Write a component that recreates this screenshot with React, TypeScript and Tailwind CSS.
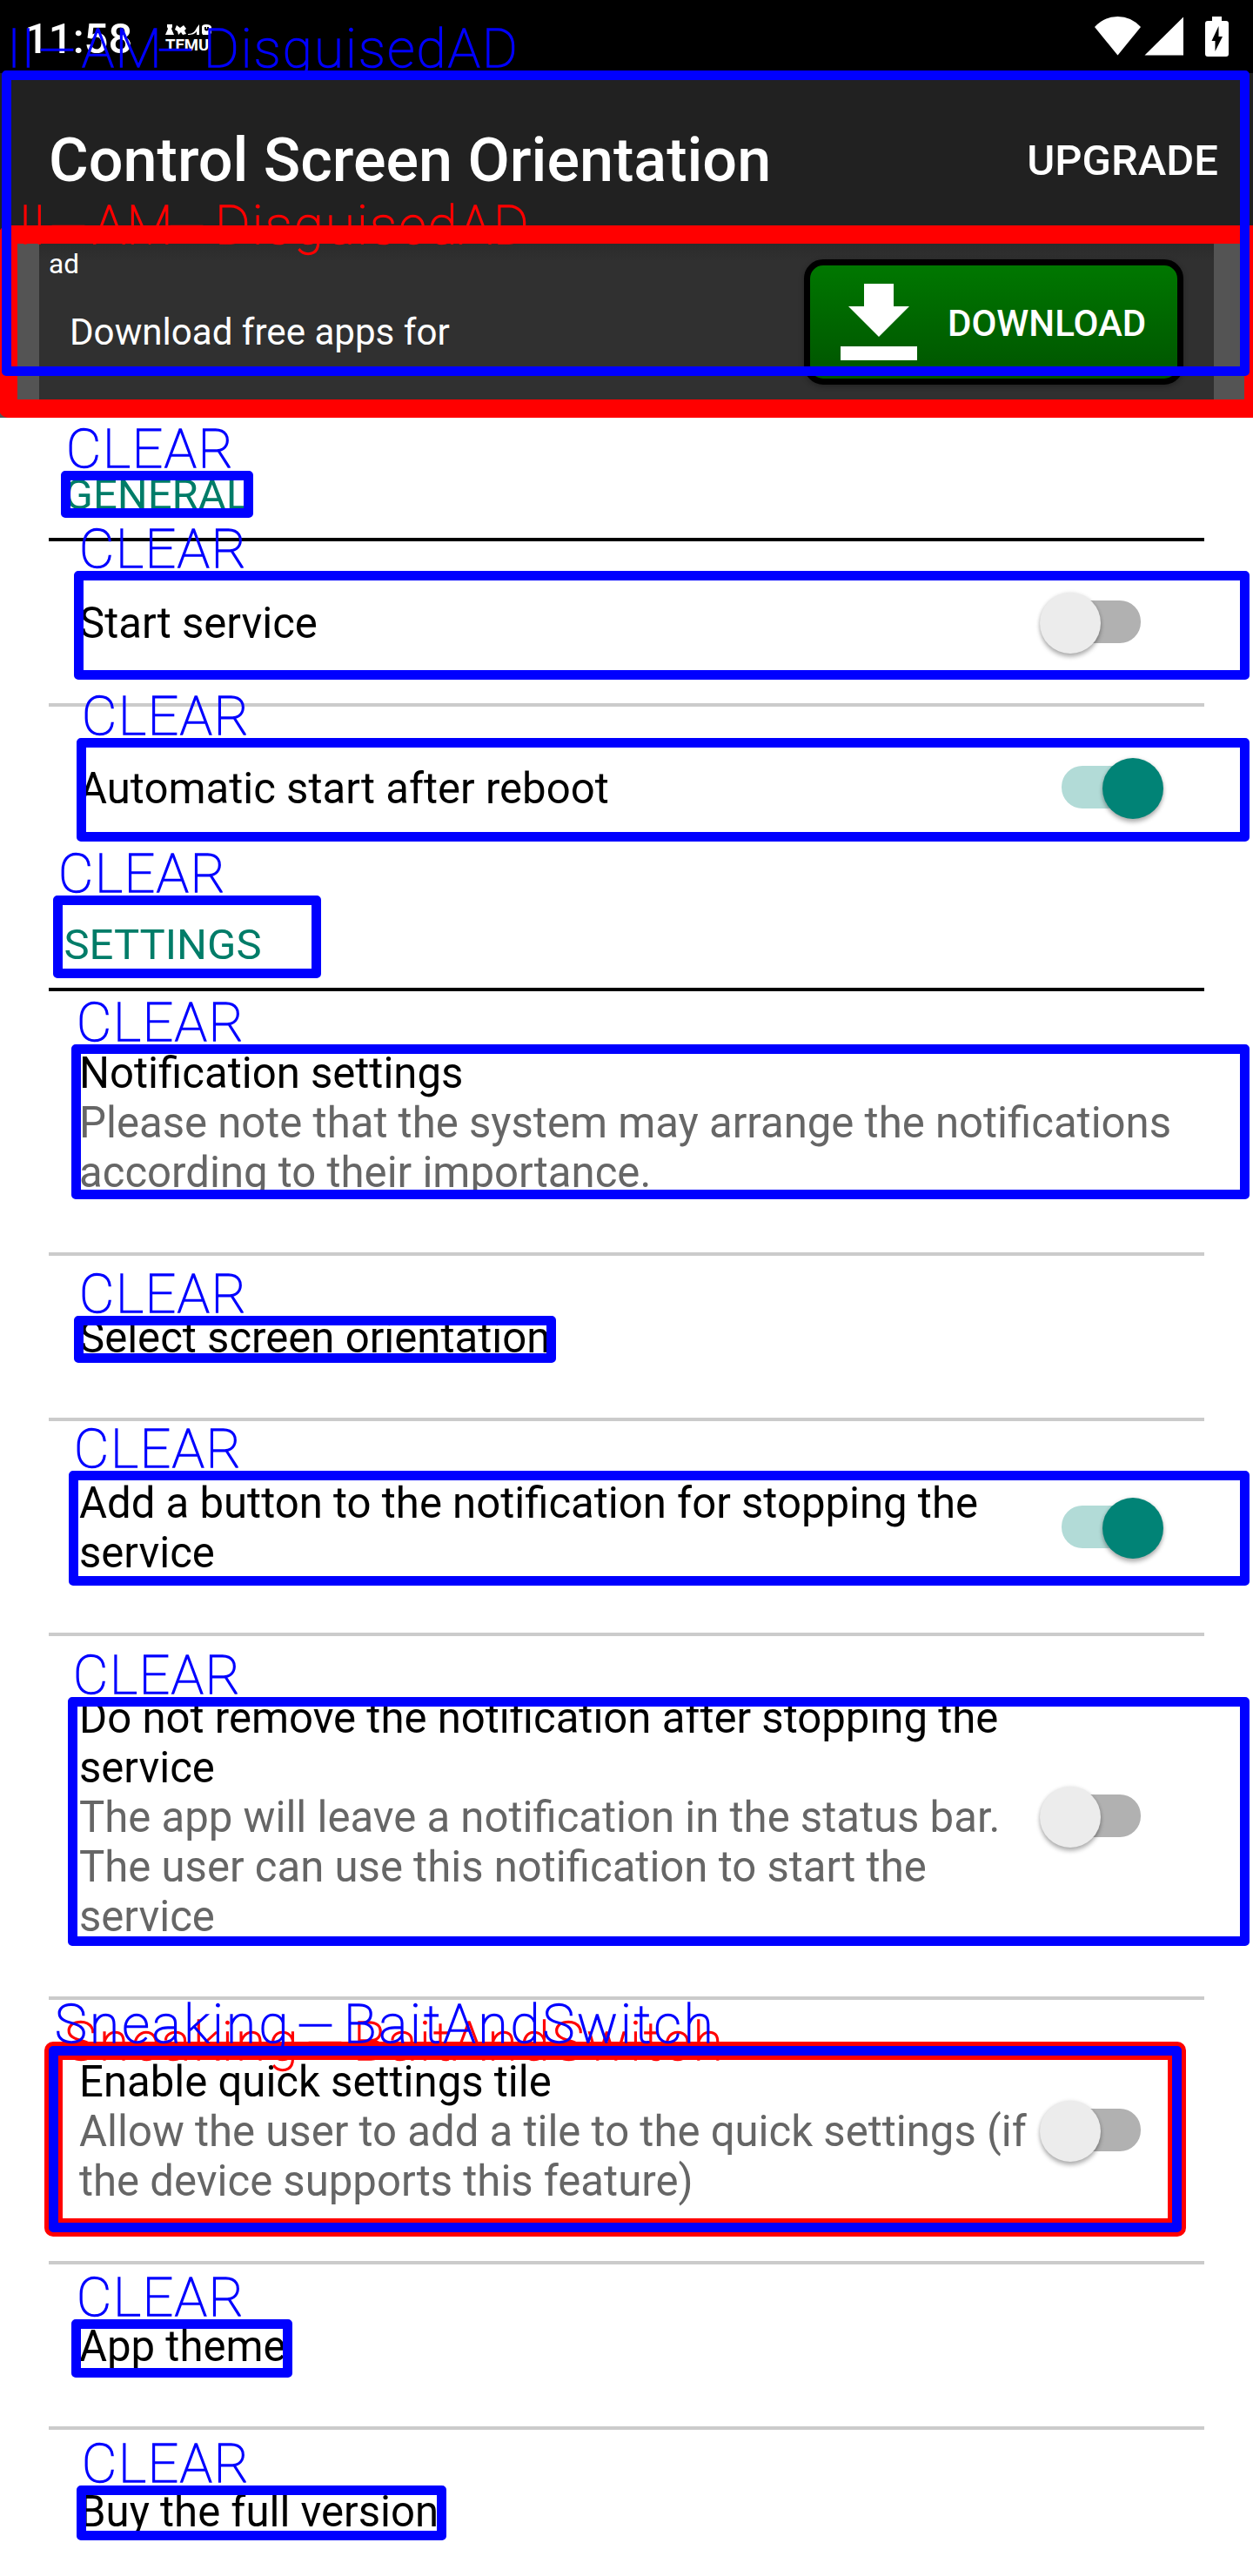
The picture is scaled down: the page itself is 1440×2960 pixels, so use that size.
import React from 'react';

type Line = { text: string; muted?: boolean };

function Switch({ on }: { on: boolean }) {
  const thumb = 'mt-[3px] size-[70px] shrink-0 rounded-full shadow-[0_4px_5px_rgba(0,0,0,0.28),0_0_4px_rgba(0,0,0,0.12)] ';
  return (
    <div
      className={
        'mb-1 flex h-[49px] w-[91px] shrink-0 items-center rounded-[24px] ' +
        (on ? 'justify-end bg-[#b2dbd7]' : 'justify-start bg-[#b1b1b1]')
      }
    >
      <div className={thumb + (on ? '-mr-[26px] bg-[#018376]' : '-ml-[25px] bg-[#ececec]')} />
    </div>
  );
}

function Row({ lines, on, last }: { lines: Line[]; on?: boolean; last?: boolean }) {
  return (
    <div
      className={
        'mx-14 flex items-center justify-between pb-[63px] pl-[35px] pr-[73px] pt-[66px] ' +
        (last ? '' : 'border-b-4 border-[#cbcbcb]')
      }
    >
      <div className="w-0 whitespace-nowrap text-[49.1px] leading-[57px]">
        {lines.map((l, i) => (
          <div key={i} className={l.muted ? 'text-[#666666]' : 'text-black'}>
            {l.text}
          </div>
        ))}
      </div>
      {on !== undefined && <Switch on={on} />}
    </div>
  );
}

function Header({ children }: { children: string }) {
  return (
    <div className="mx-14 h-[141px] border-b-4 border-black pl-[17.5px] pt-[59px] text-[49px] leading-[57px] text-[#007c68]">
      {children}
    </div>
  );
}

const Dash = () => <span className="inline-block w-[64px] origin-center scale-x-[2.4] text-center">-</span>;

const labels = {
  clear: <span className="tracking-[1.8px]">CLEAR</span>,
  ad: (
    <>
      <span className="w-[26px]">II</span>
      <Dash />
      <span className="-ml-1 w-[76px] tracking-[1.5px]">AM</span>
      <Dash />
      <span className="tracking-[2.2px]">DisguisedAD</span>
    </>
  ),
  bait: (
    <>
      <span className="w-[269px] pl-px tracking-[3.4px]">Sneaking</span>
      <Dash />
      <span className="tracking-[3px]">BaitAndSwitch</span>
    </>
  ),
};

/* A labelled outline drawn over the screen. */
function Mark({ className, label = 'clear', heavy }: { className: string; label?: keyof typeof labels; heavy?: boolean }) {
  return (
    <div
      className={
        'absolute ' +
        (heavy
          ? 'rounded-[10px] border-[21px] border-[#ff0000] text-[#ff0000] '
          : 'rounded-[5px] border-[11px] border-[#0000ff] text-[#0000ff] ') +
        className
      }
    >
      <div
        className={
          'flex h-[62px] whitespace-nowrap text-[62px] font-thin leading-[62px] [-webkit-text-stroke:1.5px_currentColor] ' +
          (heavy ? '-mt-[52px] ml-px' : '-ml-[5px] -mt-[67px]')
        }
      >
        {labels[label]}
      </div>
    </div>
  );
}

function StatusBar() {
  return (
    <div className="flex h-[84px] bg-black px-[28px] text-white">
      <div className="w-[162px] pt-[16px] text-[49px] font-medium leading-[57px]">11:58</div>
      <div className="pt-[28px]">
        <svg width="54" height="12" viewBox="0 0 54 12" fill="white">
          <path d="M2 0h6v3l-1 2 3 7H0l3-7-1-2z" />
          <path d="M13 1l4 3 4-3 3 4-2 2 2 4-4 1-2-3-3 3-1-4-3-2z" />
          <path d="M26 11c6 0 8-3 10-7l3-4v12h-3V8c-2 3-5 4-10 4z" />
          <path fillRule="evenodd" d="M42 3q0-3 5-3t6 3v7l-2 2h-8l-1-2zm3 0v3q2 3 5 0V3h-2v2h-1V3z" />
        </svg>
        <div className="mt-[3px] text-[18.5px] font-bold leading-[18px]">TEMU</div>
      </div>
      <svg className="ml-auto mt-[18px]" width="156" height="48" viewBox="1256 18 156 48" fill="white">
        <path d="M1258 31Q1269 19 1284.500 19T1311 31L1284.500 63.500z" />
        <path d="M1360 19.500V63.500H1315.500z" />
        <path
          fillRule="evenodd"
          d="M1393 19h11v5h5q3 0 3 3v35q0 3-3 3h-21q-3 0-3-3V27q0-3 3-3h5zm7.500 11l-8 17h4v12l8.500-17h-4.500z"
        />
      </svg>
    </div>
  );
}

function AdBanner() {
  return (
    <div className="h-[200px] bg-[#545454] px-[45px]">
      <div className="flex h-full justify-between bg-[#303030] bg-linear-to-b from-[#2b2b2b] to-[#303030] to-10% pl-[11px] pr-[35px] text-white">
        <div className="pt-[5px]">
          <div className="text-[31.5px] leading-[37px]">ad</div>
          <div className="pl-[24px] pt-[35px] text-[42.1px] leading-[49px]">Download free apps for</div>
        </div>
        <div className="mt-[18px] flex h-[144px] w-[436px] rounded-[22px] border-7 border-black bg-linear-to-b from-[#007700] to-[#005500] shadow-[0_2px_6px_rgba(0,0,0,0.3)]">
          <svg className="ml-[35px] mt-[21px]" width="88" height="88" viewBox="0 0 88 88" fill="white">
            <path d="M27 0H61V26H79L44 61L9 26H27z" />
            <rect y="72" width="88" height="16" />
          </svg>
          <div className="ml-[35px] mt-[42px] text-[42px] font-medium leading-[49px]">DOWNLOAD</div>
        </div>
      </div>
    </div>
  );
}

export default function App() {
  return (
    <div className="relative h-[2960px] w-[1440px] overflow-hidden bg-white font-['Roboto',sans-serif]">
      <StatusBar />
      <div className="flex h-[196px] items-center justify-between bg-[#212121] pl-14 pr-[40px] pt-1 text-white">
        <h1 className="text-[70.1px] font-medium leading-[82px]">Control Screen Orientation</h1>
        <span className="text-[49px] font-medium leading-[57px]">UPGRADE</span>
      </div>
      <AdBanner />
      <div className="pt-px">
        <Header>GENERAL</Header>
        <Row lines={[{ text: 'Start service' }]} on={false} />
        <Row lines={[{ text: 'Automatic start after reboot' }]} on last />
        <Header>SETTINGS</Header>
        <Row
          lines={[
            { text: 'Notification settings' },
            { text: 'Please note that the system may arrange the notifications', muted: true },
            { text: 'according to their importance.', muted: true },
          ]}
        />
        <Row lines={[{ text: 'Select screen orientation' }]} />
        <Row lines={[{ text: 'Add a button to the notification for stopping the' }, { text: 'service' }]} on />
        <Row
          lines={[
            { text: 'Do not remove the notification after stopping the' },
            { text: 'service' },
            { text: 'The app will leave a notification in the status bar.', muted: true },
            { text: 'The user can use this notification to start the', muted: true },
            { text: 'service', muted: true },
          ]}
          on={false}
        />
        <Row
          lines={[
            { text: 'Enable quick settings tile' },
            { text: 'Allow the user to add a tile to the quick settings (if', muted: true },
            { text: 'the device supports this feature)', muted: true },
          ]}
          on={false}
        />
        <Row lines={[{ text: 'App theme' }]} />
        <Row lines={[{ text: 'Buy the full version' }]} last />
      </div>

      <Mark heavy label="ad" className="left-[-1px] top-[259px] h-[221px] w-[1452px]" />
      <Mark label="ad" className="left-[2px] top-[81px] h-[351px] w-[1434px]" />
      <Mark className="left-[70px] top-[541px] h-[54px] w-[221px]" />
      <Mark className="left-[85px] top-[656px] h-[125px] w-[1351px]" />
      <Mark className="left-[88px] top-[848px] h-[119px] w-[1348px]" />
      <Mark className="left-[61px] top-[1029px] h-[95px] w-[308px]" />
      <Mark className="left-[82px] top-[1200px] h-[178px] w-[1354px]" />
      <Mark className="left-[85px] top-[1512px] h-[54px] w-[554px]" />
      <Mark className="left-[79px] top-[1690px] h-[132px] w-[1357px]" />
      <Mark className="left-[78px] top-[1950px] h-[286px] w-[1358px]" />
      <Mark heavy label="bait" className="left-[51px] top-[2346px] h-[224px] w-[1312px]" />
      <Mark label="bait" className="left-[56px] top-[2351px] h-[214px] w-[1302px]" />
      <Mark className="left-[82px] top-[2665px] h-[67px] w-[254px]" />
      <Mark className="left-[88px] top-[2856px] h-[63px] w-[425px]" />
    </div>
  );
}
